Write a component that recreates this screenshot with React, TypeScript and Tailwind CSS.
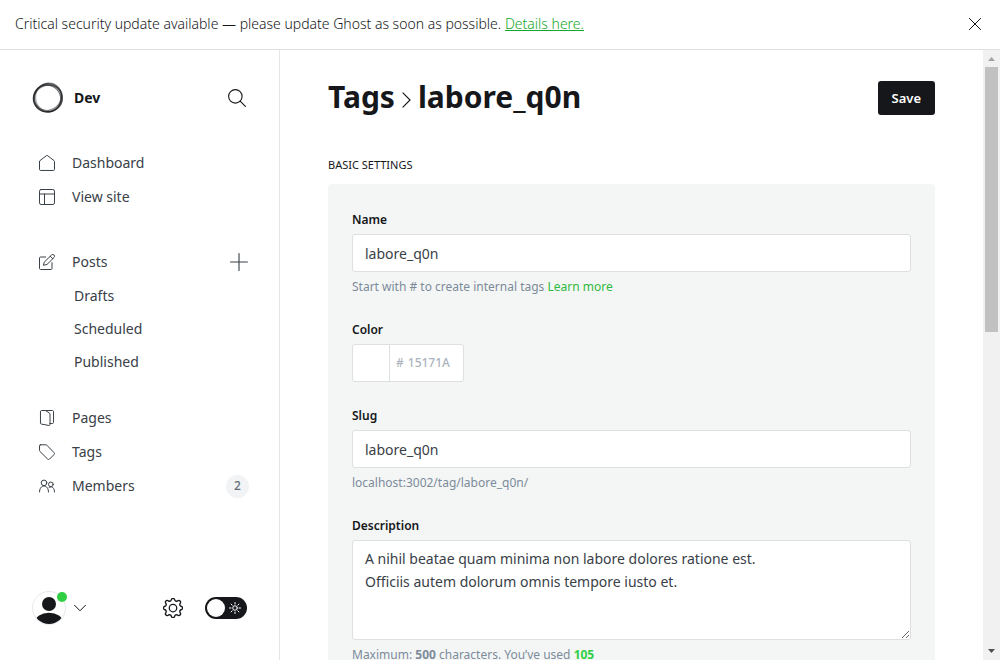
import type { ReactNode } from 'react';

type IconProps = { children: ReactNode; className?: string };

function Icon({ children, className = 'size-4' }: IconProps) {
  return (
    <svg
      viewBox="0 0 24 24"
      fill="none"
      stroke="currentColor"
      strokeWidth="1.5"
      strokeLinecap="round"
      strokeLinejoin="round"
      aria-hidden="true"
      className={`shrink-0 ${className}`}
    >
      {children}
    </svg>
  );
}

const icons = {
  dashboard: <path d="M.75 9.800v11.700c0 1 .7 1.700 1.700 1.700h19.100c1 0 1.700-.7 1.700-1.700V9.800c0-.6-.3-1.100-.7-1.400L13.200 1.200c-.7-.6-1.700-.6-2.400 0L1.450 8.400c-.4.300-.7.800-.7 1.400z" />,
  site: (
    <>
      <rect x=".75" y=".75" width="22.500" height="22.500" rx="2.500" />
      <path d="M.75 7.500h22.500M8.250 7.500v15.750" />
    </>
  ),
  posts: (
    <>
      <path d="M19.500 13v8.700c0 .9-.7 1.550-1.550 1.550H2.300c-.9 0-1.550-.7-1.550-1.550V6.050c0-.9.7-1.550 1.550-1.550H10" />
      <path d="M8.200 11.900 18.700 1.500a2.600 2.600 0 0 1 3.800 3.800L12 15.700l-4.800 1.100zM16.800 3.400l3.800 3.800" />
    </>
  ),
  pages: (
    <>
      <path d="M2.200 2.300v17.200c0 .8.500 1.400 1.300 1.600l11.300 2.100c.9.100 1.700-.5 1.700-1.500V6c0-.8-.5-1.500-1.300-1.700L10 .9" />
      <path d="M2.200 2.300c0-.9.700-1.550 1.550-1.550h16.500c.9 0 1.550.7 1.550 1.550v16.400c0 .9-.7 1.550-1.550 1.550H16.500" />
    </>
  ),
  tags: <path d="M2 1.200h8.400c.5 0 1 .2 1.400.6L22.600 13c.8.800.8 2 0 2.800l-6.800 6.800c-.8.800-2 .8-2.800 0L1.400 11.200c-.4-.4-.6-.9-.6-1.400V2.400c0-.7.500-1.200 1.200-1.200z" />,
  members: (
    <>
      <circle cx="7.500" cy="7.300" r="4.200" />
      <path d="M.75 21c0-5 2.600-9 6.750-9s6.750 4 6.750 9" />
      <circle cx="17.800" cy="9.500" r="3.500" />
      <path d="M15.200 14c4.600-2.600 8.050 1 8.050 7" />
    </>
  ),
};

type NavItemProps = { icon: ReactNode; label: string; children?: ReactNode };

function NavItem({ icon, label, children }: NavItemProps) {
  return (
    <li className="flex h-[34px] items-center justify-between pr-[31px] pl-[39px]">
      <a href="#" className="flex items-center gap-[17px]">
        <Icon>{icon}</Icon>
        <span className="pb-[2px]">{label}</span>
      </a>
      {children}
    </li>
  );
}

function Logo() {
  return (
    <svg viewBox="0 0 32 32" fill="none" stroke="#15171a" className="size-8" aria-hidden="true">
      <ellipse cx="16" cy="16" rx="14.200" ry="13.800" strokeWidth="1.600" opacity=".65" />
      <ellipse cx="15.300" cy="16.600" rx="13.800" ry="13.400" strokeWidth="1.200" opacity=".6" transform="rotate(25 15 16)" />
      <ellipse cx="16.800" cy="15.200" rx="14" ry="13" strokeWidth="1.200" opacity=".5" transform="rotate(-50 16 16)" />
      <ellipse cx="17" cy="15.400" rx="13.400" ry="14.200" strokeWidth="1.200" opacity=".35" />
      <ellipse cx="15.500" cy="16.300" rx="14.200" ry="13" strokeWidth="1" opacity=".55" transform="rotate(-30 16 16)" />
    </svg>
  );
}

function Sidebar() {
  return (
    <aside className="flex w-[280px] shrink-0 flex-col border-r border-[#e3e5e8]">
      <header className="flex h-24 items-center justify-between pr-[33px] pl-8">
        <a href="#" className="flex items-center gap-[10px] text-[14px] leading-5 font-bold text-[#15171a]">
          <Logo />
          Dev
        </a>
        <button type="button" aria-label="Search" className="text-[#15171a]">
          <Icon className="size-[18px]">
            <circle cx="9.800" cy="9.800" r="9" />
            <path d="m16.200 16.200 7 7" />
          </Icon>
        </button>
      </header>

      <nav className="grow text-[14px]">
        <ul>
          <NavItem icon={icons.dashboard} label="Dashboard" />
          <NavItem icon={icons.site} label="View site" />
        </ul>
        <ul className="mt-[31px]">
          <NavItem icon={icons.posts} label="Posts">
            <button type="button" aria-label="New post">
              <Icon className="size-[18px]">
                <path d="M12 .75v22.500M.75 12h22.500" />
              </Icon>
            </button>
          </NavItem>
          {['Drafts', 'Scheduled', 'Published'].map((label) => (
            <li key={label} className="flex h-[33px] items-center pl-[74px]">
              <a href="#">{label}</a>
            </li>
          ))}
        </ul>
        <ul className="mt-[23px]">
          <NavItem icon={icons.pages} label="Pages" />
          <NavItem icon={icons.tags} label="Tags" />
          <NavItem icon={icons.members} label="Members">
            <span className="-mr-px flex size-[23px] items-center justify-center rounded-full bg-[#f1f3f4] text-[12px] font-medium text-[#626d79]">
              2
            </span>
          </NavItem>
        </ul>
      </nav>

      <footer className="flex items-center justify-between pr-8 pb-[35px] pl-8">
        <button type="button" aria-label="Account menu" className="flex items-center gap-2">
          <span className="relative">
            <svg viewBox="0 0 34 34" className="size-[34px]" aria-hidden="true">
              <defs>
                <clipPath id="avatar">
                  <circle cx="17" cy="17" r="16" />
                </clipPath>
              </defs>
              <circle cx="17" cy="17" r="16.500" fill="#fff" stroke="#e6e8ea" />
              <g fill="#15171a" clipPath="url(#avatar)">
                <circle cx="17" cy="13" r="7" />
                <ellipse cx="17" cy="31.500" rx="14" ry="9.800" />
              </g>
            </svg>
            <span className="absolute top-px -right-px size-[10px] rounded-full bg-[#30cf43]" />
          </span>
          <Icon className="size-3 text-[#15171a]">
            <path d="m1 6.500 11 11 11-11" strokeWidth="2" />
          </Icon>
        </button>
        <div className="flex items-center gap-[22px]">
          <a href="#" aria-label="Settings" className="text-[#15171a]">
            <Icon className="size-5">
              <path d="m10.500 2.300-.4 1a2 2 0 0 1-2.700 1.100l-1-.5a1.900 1.900 0 0 0-2.500 2.500l.5 1a2 2 0 0 1-1.100 2.700l-1 .4a1.900 1.900 0 0 0 0 3l1 .4a2 2 0 0 1 1.100 2.700l-.5 1a1.900 1.900 0 0 0 2.500 2.500l1-.5a2 2 0 0 1 2.700 1.100l.4 1a1.900 1.900 0 0 0 3 0l.4-1a2 2 0 0 1 2.700-1.100l1 .5a1.900 1.900 0 0 0 2.500-2.500l-.5-1a2 2 0 0 1 1.100-2.700l1-.4a1.900 1.900 0 0 0 0-3l-1-.4a2 2 0 0 1-1.100-2.700l.5-1a1.900 1.900 0 0 0-2.500-2.500l-1 .5a2 2 0 0 1-2.700-1.100l-.4-1a1.900 1.900 0 0 0-3 0z" transform="translate(-1.200 -1.200) scale(1.100)" />
              <circle cx="12" cy="12" r="4.500" />
            </Icon>
          </a>
          <button
            type="button"
            role="switch"
            aria-checked="false"
            aria-label="Dark mode"
            className="flex h-[22px] w-[42px] items-center justify-between rounded-full bg-[#15171a] pr-[6px] pl-[2px] text-white"
          >
            <span className="size-[18px] rounded-full bg-white" />
            <Icon className="size-3">
              <circle cx="12" cy="12" r="4.500" strokeWidth="2" />
              <path
                d="M12 1v3M12 20v3M1 12h3M20 12h3M4.200 4.200l2.200 2.200M17.600 17.600l2.200 2.200M4.200 19.800l2.200-2.200M17.600 6.400l2.200-2.200"
                strokeWidth="2"
              />
            </Icon>
          </button>
        </div>
      </footer>
    </aside>
  );
}

type FieldProps = { id: string; label: string; help?: ReactNode; children: ReactNode };

function Field({ id, label, help, children }: FieldProps) {
  return (
    <div className="flex flex-col">
      <label htmlFor={id} className="mb-[2px] text-[12px] leading-6 font-semibold text-[#15171a]">
        {label}
      </label>
      {children}
      {help && <p className="mt-[5px] -mb-px text-[12px] leading-5 text-[#7c8b9a]">{help}</p>}
    </div>
  );
}

function TagForm() {
  return (
    <form className="flex flex-col gap-[22px] rounded bg-[#f4f6f6] p-6">
      <Field
        id="name"
        label="Name"
        help={
          <>
            Start with # to create internal tags{' '}
            <a href="#" className="text-[#30b940]">
              Learn more
            </a>
          </>
        }
      >
        <input
          id="name"
          defaultValue="labore_q0n"
          className="h-[38px] rounded-[3px] border border-[#dddfe0] bg-white px-3 text-[14px] outline-none"
        />
      </Field>

      <Field id="color" label="Color">
        <div className="flex h-[38px] w-28 items-stretch rounded-[3px] border border-[#dddfe0] bg-white text-[12px] font-medium text-[#abb4be]">
          <button type="button" aria-label="Pick color" className="w-[37px] border-r border-[#dddfe0]" />
          <span className="flex items-center pr-1 pl-[6px]">#</span>
          <input id="color" placeholder="15171A" className="w-0 grow outline-none placeholder:text-[#abb4be]" />
        </div>
      </Field>

      <Field id="slug" label="Slug" help="localhost:3002/tag/labore_q0n/">
        <input
          id="slug"
          defaultValue="labore_q0n"
          className="h-[38px] rounded-[3px] border border-[#dddfe0] bg-white px-3 text-[14px] outline-none"
        />
      </Field>

      <Field
        id="description"
        label="Description"
        help={
          <>
            Maximum: <b>500</b> characters. You’ve used <b className="text-[#30cf43]">105</b>
          </>
        }
      >
        <textarea
          id="description"
          defaultValue={'A nihil beatae quam minima non labore dolores ratione est.\nOfficiis autem dolorum omnis tempore iusto et.'}
          className="h-[100px] resize rounded-[3px] border border-[#dddfe0] bg-white px-3 py-[6px] text-[14px] leading-[23px] outline-none"
        />
      </Field>
    </form>
  );
}

function ScrollBar() {
  return (
    <div aria-hidden="true" className="flex w-[17px] shrink-0 flex-col items-center bg-[#f1f1f1]">
      <svg viewBox="0 0 17 17" className="size-[17px]">
        <path d="M8.500 7 12 11H5z" fill="#a3a3a3" />
      </svg>
      <div className="w-[13px] grow">
        <div className="h-[46%] bg-[#c1c1c1]" />
      </div>
      <svg viewBox="0 0 17 17" className="size-[17px]">
        <path d="M5 6h7l-3.500 4z" fill="#505050" />
      </svg>
    </div>
  );
}

export default function App() {
  return (
    <div className="flex h-screen flex-col bg-white font-['Noto_Sans',sans-serif] text-[#394047]">
      <div
        role="alert"
        className="flex h-[50px] shrink-0 items-center justify-between border-b border-[#dddfe0] px-[15px] pb-[2px] text-[14px] font-light text-[#15171a]"
      >
        <p>
          Critical security update available — please update Ghost as soon as possible.{' '}
          <a href="#" className="text-[#14a82a] underline">
            Details here.
          </a>
        </p>
        <button type="button" aria-label="Close">
          <Icon className="mr-1 size-3">
            <path d="m.75.75 22.500 22.500M23.250.75.75 23.250" strokeWidth="2" />
          </Icon>
        </button>
      </div>

      <div className="flex min-h-0 grow">
        <Sidebar />
        <main className="min-w-0 grow overflow-y-auto px-12 pb-12 [scrollbar-width:none]">
          <header className="flex h-24 items-center justify-between">
            <h1 className="flex items-center gap-[7px] pb-1 text-[30px] font-bold text-[#15171a]">
              <a href="#">Tags</a>
              <svg viewBox="0 0 10 18" fill="none" stroke="currentColor" className="mt-2 h-4 w-[9px]" aria-hidden="true">
                <path d="m1 1 8 8-8 8" strokeWidth="1.300" strokeLinecap="round" />
              </svg>
              labore_q0n
            </h1>
            <button type="button" className="h-[34px] rounded-[3px] bg-[#15171a] px-[14px] pt-[2px] text-[13px] font-semibold text-white">
              Save
            </button>
          </header>
          <h2 className="mt-[10px] mb-[10px] text-[11px] leading-[18px] text-[#15171a] uppercase">Basic settings</h2>
          <TagForm />
        </main>
        <ScrollBar />
      </div>
    </div>
  );
}
